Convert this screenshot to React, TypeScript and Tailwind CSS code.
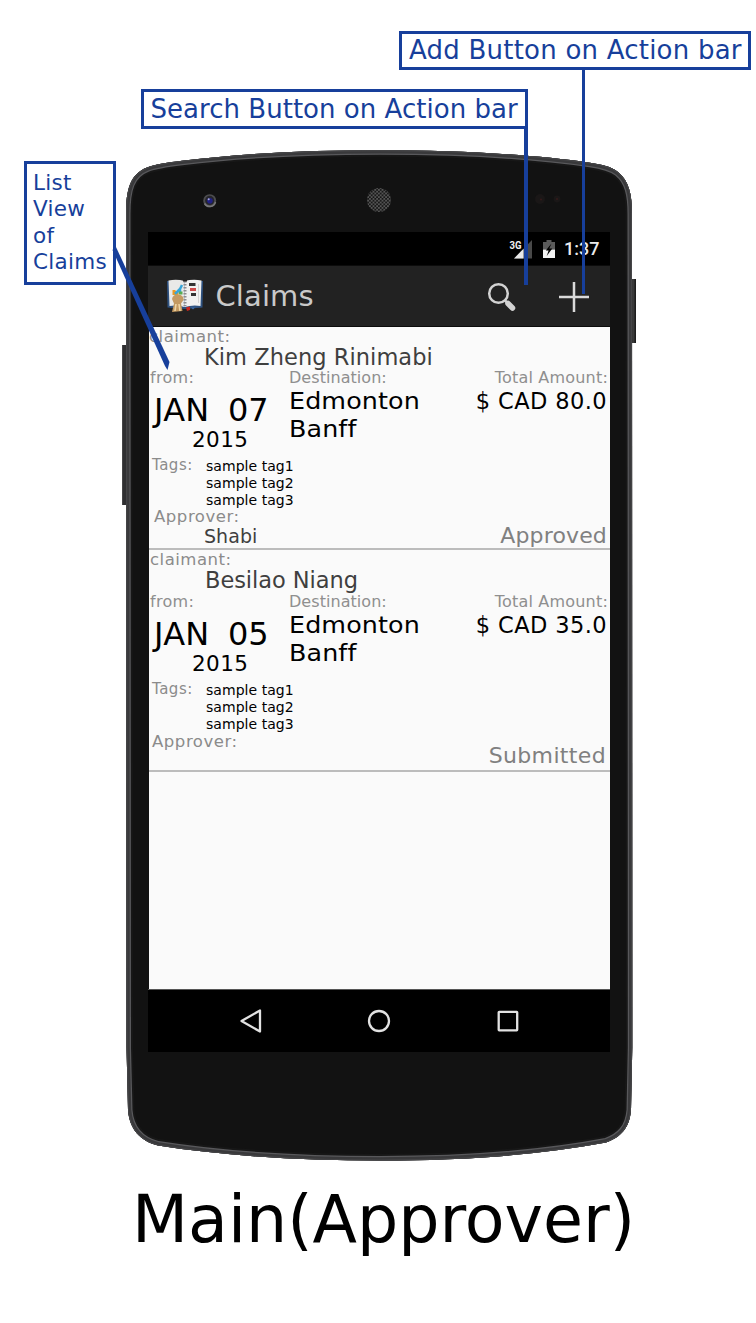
import React from "react";

type Claim = {
  claimant: string;
  month: string;
  day: string;
  year: string;
  destinations: string[];
  total: string;
  tags: string[];
  approver?: string;
  status: string;
  labelPad: string;
  namePad: string;
  fromPad: string;
  approverPad: string;
  footer: string;
  statusClass: string;
};

const claims: Claim[] = [
  {
    claimant: "Kim Zheng Rinimabi",
    month: "JAN",
    day: "07",
    year: "2015",
    destinations: ["Edmonton", "Banff"],
    total: "$ CAD 80.0",
    tags: ["sample tag1", "sample tag2", "sample tag3"],
    approver: "Shabi",
    status: "Approved",
    labelPad: "",
    namePad: "pl-[55px] tracking-[0.05px]",
    fromPad: "h-[17px]",
    approverPad: "pl-[5px]",
    footer: "h-6",
    statusClass: "pr-[3px] tracking-[0.15px] leading-[23px]",
  },
  {
    claimant: "Besilao Niang",
    month: "JAN",
    day: "05",
    year: "2015",
    destinations: ["Edmonton", "Banff"],
    total: "$ CAD 35.0",
    tags: ["sample tag1", "sample tag2", "sample tag3"],
    status: "Submitted",
    labelPad: "pl-px",
    namePad: "pl-[56px] -tracking-[0.05px]",
    fromPad: "h-[18px] pt-px",
    approverPad: "pl-[3px] pt-px",
    footer: "h-[21px]",
    statusClass: "pr-[4px] tracking-[0.35px] leading-[13px]",
  },
];

const BODY =
  "M126 214 C126 190 130 174 147 167.500 C156 164 168 162.500 182 160.800 C245 153 310 150.300 380 150.300 C455 150.300 530 154 590 162.800 C602 164.500 611 166.500 618 172 C629 181 632 194 632 214 L632.300 1047 L631 1110 C629.500 1128 621 1137 606 1142.500 C540 1155 465 1160.500 380 1160.500 C300 1160.500 225 1156 158 1145.500 C140 1141 129.500 1129 128 1110 L126.500 1047 Z";

function PhoneBody() {
  return (
    <svg className="absolute inset-0" width="756" height="1323" viewBox="0 0 756 1323">
      <defs>
        <clipPath id="body">
          <path d={BODY} />
        </clipPath>
        <pattern id="mesh" width="3.6" height="3.6" patternUnits="userSpaceOnUse">
          <rect width="3.6" height="3.6" fill="#555" />
          <circle cx="0.9" cy="0.9" r="1" fill="#111" />
          <circle cx="2.7" cy="2.7" r="1" fill="#111" />
        </pattern>
      </defs>
      <rect x="122" y="345" width="6" height="160" rx="1" fill="#2f2f31" />
      <rect x="122" y="345" width="1" height="160" fill="#454547" />
      <rect x="630" y="279" width="6" height="64" rx="1" fill="#3a3a3a" />
      <rect x="634.5" y="279" width="1.5" height="64" fill="#1d1d1d" />
      <g clipPath="url(#body)">
        <path d={BODY} fill="#121212" stroke="#171717" strokeWidth="13" />
        <path d={BODY} fill="none" stroke="#58585b" strokeWidth="9" />
        <path d={BODY} fill="none" stroke="#39393b" strokeWidth="6.5" />
        <path d={BODY} fill="none" stroke="#464648" strokeWidth="2" />
      </g>
      <circle cx="209.7" cy="200.7" r="6.5" fill="#4d4d4f" />
      <path d="M204.500 203.500 A6 6 0 0 0 215.500 202" fill="none" stroke="#77777a" strokeWidth="1.5" />
      <circle cx="209.7" cy="200.4" r="4.6" fill="#25252b" />
      <circle cx="209.9" cy="200.7" r="2.8" fill="#202085" />
      <circle cx="208.7" cy="199.3" r="1" fill="#a9a9d8" />
      <circle cx="379" cy="200" r="12" fill="url(#mesh)" />
      <circle cx="540" cy="199" r="5" fill="#1a1717" />
      <circle cx="557" cy="199" r="3.4" fill="#1a1717" />
      <circle cx="541" cy="199.5" r="1" fill="#351a1a" />
      <circle cx="557" cy="199" r="1" fill="#351a1a" />
    </svg>
  );
}

function BookIcon() {
  return (
    <svg width="38" height="34" viewBox="0 0 38 34">
      <path d="M1 2 L1.500 28.500 L19 30 L36.500 28.500 L37 2 Z" fill="#2f5280" />
      <path d="M2.500 1.500 Q11 0 18.500 2 L18.500 28 Q11 25.500 3.500 27 Z" fill="#e9e9e8" />
      <path d="M18.500 2 Q27 0 35.500 1.500 L34.500 27 Q27 25.500 18.500 28 Z" fill="#f1f1f0" />
      <path d="M19 2 V27" stroke="#8d8d90" strokeWidth="3" strokeDasharray="1.6 1.4" />
      <path d="M17 1.500 H21" stroke="#222" strokeWidth="2" />
      <path d="M8 16 V11 M11 16 V12" stroke="#e99a24" strokeWidth="3" />
      <path d="M9 15 L14 10 L16 6 M14 15 V10" stroke="#36a5d8" strokeWidth="2.5" fill="none" />
      <path d="M13 14 H16.500" stroke="#58ac50" strokeWidth="3" />
      <path d="M23 5.500 H29.500 M25 15.500 H30" stroke="#333" strokeWidth="3" />
      <path d="M24 10.500 H30" stroke="#cf4b4b" strokeWidth="3" />
      <path d="M32.500 5 V24" stroke="#d2d2d2" strokeWidth="1" />
      <path d="M6 20 Q7 15 12 15.500 Q18 16 17.500 21 L15 24.500 L16.500 32 L6 33 L8 24.500 Z" fill="#c49a62" />
      <path d="M10 25 L9 32 M13 25 L14 32" stroke="#f0d6a4" strokeWidth="1.6" />
      <path d="M20 28.500 L24 27.500 L24 31 L21 32 Z" fill="#c9241d" />
      <path d="M25 28.500 L29 28.500 L27 30.500 Z" fill="#3c6ca8" />
    </svg>
  );
}

function StatusBar() {
  return (
    <div className="flex h-[33px] items-center bg-black pl-[361px]">
      <svg width="24" height="22" viewBox="0 0 24 22" className="shrink-0">
        <path d="M23 2 V20.500 H5 Z" fill="#494949" />
        <path d="M14.500 10.800 V20.500 H5 Z" fill="#e9e9e9" />
        <text x="0.500" y="10.500" fontSize="11" fontWeight="700" fill="#f1f1f1" fontFamily="Roboto, sans-serif" textLength="12" lengthAdjust="spacingAndGlyphs">3G</text>
      </svg>
      <svg width="12" height="18" viewBox="0 0 12 18" className="ml-[10px] shrink-0">
        <path d="M0 2 H3.500 V0 H8.500 V2 H12 V9.500 H0 Z" fill="#5b5b5b" />
        <path d="M0 9.500 H12 V18 H0 Z" fill="#f3f3f3" />
        <path d="M8.500 3.500 L2.800 10.500 H5.600 L3.700 16 L9.300 8.500 H6.300 Z" fill="#000" />
      </svg>
      <span className="ml-[9px] font-[Roboto,sans-serif] text-[18px] font-medium leading-none text-[#ececec]">1:37</span>
    </div>
  );
}

function ActionBar() {
  return (
    <header className="flex h-[62px] items-center border-y border-[#0c0c0c] bg-[#222] pl-[18px]">
      <BookIcon />
      <h1 className="ml-[11.500px] w-[269px] text-[29px] leading-none tracking-[0.1px] text-[#c9c9c9]">Claims</h1>
      <svg width="30" height="32" viewBox="0 0 30 32" className="mt-px ml-px shrink-0">
        <circle cx="12.500" cy="12.500" r="9.300" fill="none" stroke="#d3d3d3" strokeWidth="2.500" />
        <path d="M19 19.500 L22 22.500" stroke="#d3d3d3" strokeWidth="2.500" />
        <path d="M22 22.500 L26.500 27" stroke="#d3d3d3" strokeWidth="5.500" strokeLinecap="round" />
      </svg>
      <svg width="32" height="32" viewBox="0 0 32 32" className="ml-[42px] mt-px shrink-0">
        <path d="M16 1 V31 M1 16 H31" stroke="#dadada" strokeWidth="2.500" />
      </svg>
    </header>
  );
}

function ClaimItem({ claim }: { claim: Claim }) {
  return (
    <li className="flex flex-col border-b-2 border-[#bcbcbc]">
      <span className={`text-[16.5px] leading-[19px] tracking-[0.5px] text-[#8b8b8b] ${claim.labelPad}`}>claimant:</span>
      <span className={`text-[22.5px] leading-[23px] text-[#3f3f3f] ${claim.namePad}`}>{claim.claimant}</span>
      <div className={`flex text-[16px] leading-[18px] text-[#8f8f8f] ${claim.fromPad}`}>
        <span className="w-[140px] pl-px tracking-[0.3px]">from:</span>
        <span className="tracking-[0.05px]">Destination:</span>
        <span className="ml-auto pr-[2px] tracking-[0.2px]">Total Amount:</span>
      </div>
      <div className="flex h-[71px] text-black">
        <div className="flex w-[140px] flex-col pt-[6px]">
          <div className="flex text-[32px] leading-[36px]">
            <span className="w-[75px] pl-[5px] tracking-[0.3px]">{claim.month}</span>
            <span className="pl-[4px]">{claim.day}</span>
          </div>
          <span className="pl-[43px] pt-px text-[21.5px] leading-[22px] tracking-[0.4px]">{claim.year}</span>
        </div>
        <div className="flex origin-left scale-x-[1.08] flex-col pt-px text-[23.5px] leading-[28px] tracking-[0.1px]">
          {claim.destinations.map((d) => (
            <span key={d}>{d}</span>
          ))}
        </div>
        <span className="ml-auto pr-[3px] text-[22.5px] leading-[31px] tracking-[0.4px]">{claim.total}</span>
      </div>
      <div className="flex h-[52px]">
        <span className="w-[57px] pl-[3px] text-[15px] leading-[16px] tracking-[0.5px] text-[#8b8b8b]">Tags:</span>
        <div className="flex flex-col pt-px text-[14px] leading-[17px] tracking-[0.05px] text-black">
          {claim.tags.map((t) => (
            <span key={t}>{t}</span>
          ))}
        </div>
      </div>
      <span className={`text-[16.5px] leading-[15px] tracking-[0.55px] text-[#8b8b8b] ${claim.approverPad}`}>Approver:</span>
      <div className={`flex justify-between ${claim.footer}`}>
        <span className="pl-[55px] text-[19px] leading-[25px] tracking-[0.05px] text-[#3f3f3f]">{claim.approver}</span>
        <span className={`text-[22px] text-[#808080] ${claim.statusClass}`}>{claim.status}</span>
      </div>
    </li>
  );
}

function NavBar() {
  return (
    <nav className="flex h-[62px] items-center bg-black pl-[89.500px]">
      <svg width="26" height="28" viewBox="0 0 26 28">
        <path d="M22 3.500 V24.500 L3.500 14 Z" fill="none" stroke="#e2e2e2" strokeWidth="2.300" strokeLinejoin="round" />
      </svg>
      <svg width="28" height="28" viewBox="0 0 28 28" className="ml-[101.500px]">
        <circle cx="14" cy="14" r="10" fill="none" stroke="#e2e2e2" strokeWidth="2.300" />
      </svg>
      <svg width="28" height="28" viewBox="0 0 28 28" className="ml-[100.500px]">
        <rect x="4.700" y="4.800" width="18.500" height="18.500" rx="0.500" fill="none" stroke="#e2e2e2" strokeWidth="2.300" />
      </svg>
    </nav>
  );
}

function Callouts() {
  return (
    <>
      <div className="absolute left-[399px] top-[31px] h-[39px] w-[352px] whitespace-nowrap border-[3px] border-[#173f9b] pl-[7px] text-[26px] leading-[32px] tracking-[0.22px] text-[#173f9b]">
        Add Button on Action bar
      </div>
      <div className="absolute left-[141px] top-[89px] h-[40px] w-[387px] whitespace-nowrap border-[3px] border-[#173f9b] pl-[6.500px] text-[26px] leading-[34px] tracking-[0.03px] text-[#173f9b]">
        Search Button on Action bar
      </div>
      <div className="absolute left-[24px] top-[161px] flex h-[124px] w-[92px] flex-col whitespace-nowrap border-[3px] border-[#173f9b] pl-[6px] pt-[6px] text-[21.5px] leading-[26.4px] tracking-[0.3px] text-[#173f9b]">
        <span>List</span>
        <span>View</span>
        <span>of</span>
        <span>Claims</span>
      </div>
      <svg className="absolute inset-0" width="756" height="1323" viewBox="0 0 756 1323">
        <rect x="582" y="68" width="3" height="226" fill="#173f9b" />
        <rect x="524" y="127" width="4" height="158" fill="#173f9b" />
        <path d="M115.500 246 L169.500 362 L167.500 370 L165 366 L112.500 250 Z" fill="#173f9b" />
      </svg>
    </>
  );
}

export default function App() {
  return (
    <div className="relative h-[1323px] w-[756px] overflow-hidden bg-white font-['DejaVu_Sans',Verdana,sans-serif]">
      <PhoneBody />
      <main className="relative ml-[148px] mt-[232px] flex w-[462px] flex-col">
        <StatusBar />
        <ActionBar />
        <ul className="ml-px flex h-[662px] flex-col bg-[#fafafa]">
          {claims.map((c) => (
            <ClaimItem key={c.claimant} claim={c} />
          ))}
        </ul>
        <div className="h-px bg-[#555]" />
        <NavBar />
      </main>
      <Callouts />
      <h2 className="relative mt-[128px] whitespace-nowrap pl-[132px] text-[65px] leading-[80px] text-black">Main(Approver)</h2>
    </div>
  );
}
